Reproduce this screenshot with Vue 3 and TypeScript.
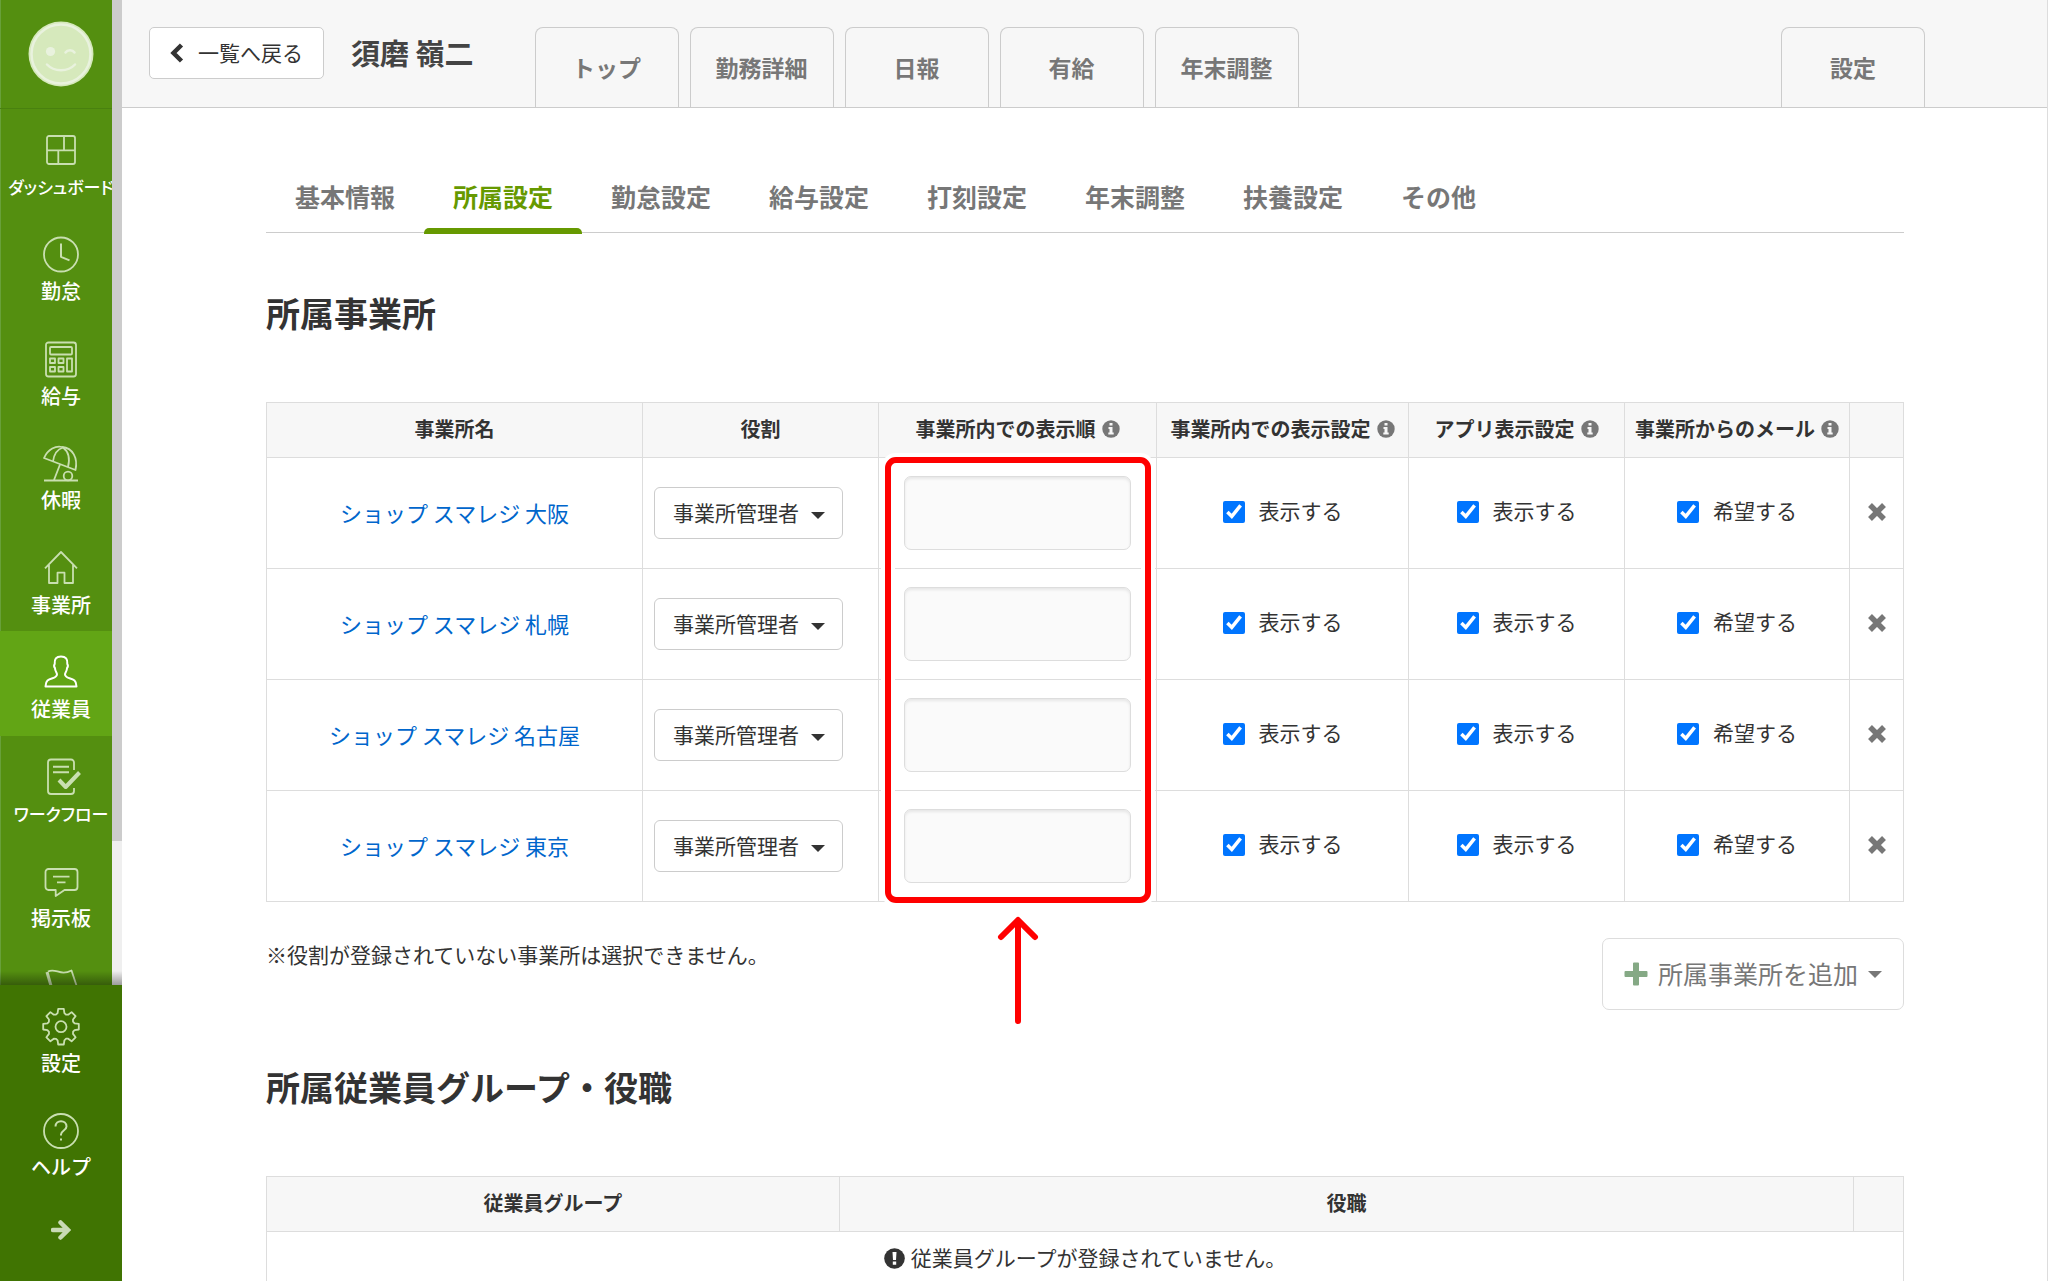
<script setup lang="ts">
import { ref } from 'vue'

interface Stroke {
  d: string
  width?: number
}

interface NavItem {
  label?: string
  strokes: Stroke[]
  active?: boolean
  tight?: boolean
}

interface Office {
  name: string
  role: string
  order: string
  visible: boolean
  appVisible: boolean
  mail: boolean
}

// Circle as a path, so that every sidebar icon is a plain list of strokes
const circle = (cx: number, cy: number, r: number): string =>
  `M${cx - r} ${cy}a${r} ${r} 0 1 0 ${2 * r} 0a${r} ${r} 0 1 0 ${-2 * r} 0z`

// Eight-toothed gear outline
const gear = (cx: number, cy: number): string => {
  const points: string[] = []
  const steps: [number, number][] = [
    [-14, 14],
    [-9, 18],
    [9, 18],
    [14, 14],
    [22, 13],
  ]
  for (let tooth = 0; tooth < 8; tooth++) {
    for (const [offset, radius] of steps) {
      const angle = ((tooth * 45 + offset) * Math.PI) / 180
      const x = cx + radius * Math.sin(angle)
      const y = cy - radius * Math.cos(angle)
      points.push(`${x.toFixed(1)} ${y.toFixed(1)}`)
    }
  }
  return `M${points.join('L')}Z`
}

const navItems: NavItem[] = [
  {
    label: 'ダッシュボード',
    tight: true,
    strokes: [
      { d: 'M8 6h24a2 2 0 0 1 2 2v24a2 2 0 0 1-2 2H8a2 2 0 0 1-2-2V8a2 2 0 0 1 2-2zM6 20.3h28M23 6v14.3M17.3 20.3V34' },
    ],
  },
  { label: '勤怠', strokes: [{ d: circle(20, 20.5, 17) }, { d: 'M20 9.5v13.3l8.5 3.5', width: 2 }] },
  {
    label: '給与',
    strokes: [
      { d: 'M7.5 3.5h25a2.5 2.5 0 0 1 2.5 2.5v29a2.5 2.5 0 0 1-2.5 2.5h-25a2.5 2.5 0 0 1-2.5-2.5v-29a2.5 2.5 0 0 1 2.5-2.5z' },
      { d: 'M10 8h20a1 1 0 0 1 1 1v5.5a1 1 0 0 1-1 1H10a1 1 0 0 1-1-1V9a1 1 0 0 1 1-1z' },
      { d: 'M9 19.5h5v4.5H9zM17.5 19.5h5v4.5h-5zM9 28h5v4.5H9zM17.5 28h5v4.5h-5zM26 19.5h5v13h-5z' },
    ],
  },
  {
    label: '休暇',
    strokes: [
      { d: 'M3 15C7 6 15 2.5 21 4C32 5 37 15 34.5 27Z' },
      { d: 'M12 18.5C13 11 17 6 22 4.5C28 9 29 16 27 24' },
      { d: 'M19 21.5L13 37M3 37.5h34' },
      { d: circle(27, 33, 4.3) },
    ],
  },
  { label: '事業所', strokes: [{ d: 'M4 20.3L20 4l16 16.3M8 17v18h8.500V24.700h7V35H32V17' }] },
  {
    label: '従業員',
    active: true,
    strokes: [
      {
        d: 'M4.5 34.5h31c0-6-3-7-7-8.3c-3-1-4.5-1.7-4.5-4c0-1.5 2-3 2-6c1.5-2 .8-3.500 .3-4.200c.5-5-1.500-7.500-6.300-7.500s-6.800 2.500-6.300 7.500c-.5.7-1.200 2.200.3 4.200c0 3 2 4.500 2 6c0 2.300-1.500 3-4.500 4c-4 1.300-7 2.300-7 8.300z',
        width: 2,
      },
    ],
  },
  {
    label: 'ワークフロー',
    tight: true,
    strokes: [
      { d: 'M33 13V5.500a3 3 0 0 0-3-3H10a3 3 0 0 0-3 3V34a3 3 0 0 0 3 3h20a3 3 0 0 0 3-3V31' },
      { d: 'M12 9.700h16M12 15.300h16', width: 2 },
      { d: 'M18 23l6.700 7L38.500 15.500', width: 4 },
    ],
  },
  {
    label: '掲示板',
    strokes: [
      { d: 'M7.500 8h26a3 3 0 0 1 3 3v15a3 3 0 0 1-3 3H23.500l-8.800 6V29H7.500a3 3 0 0 1-3-3V11a3 3 0 0 1 3-3zM12 15.700h16.500M16 21.300h8.500' },
    ],
  },
  {
    strokes: [{ d: 'M6 6l9 31', width: 3 }, { d: 'M7 5.500c8-4 12 5 23.500-1L37 24c-10 5-14-4-24 0' }],
  },
]

const footerItems: NavItem[] = [
  { label: '設定', strokes: [{ d: gear(20, 20.7) }, { d: circle(20, 20.7, 5.5) }] },
  {
    label: 'ヘルプ',
    strokes: [
      { d: circle(20, 21, 17) },
      { d: 'M14.500 16.500c0-7 11-7 11 0c0 4-5.500 4-5.500 8v1M20 28.500v2', width: 2 },
    ],
  },
]

const pageTabs: string[] = ['トップ', '勤務詳細', '日報', '有給', '年末調整']
const sections: string[] = ['基本情報', '所属設定', '勤怠設定', '給与設定', '打刻設定', '年末調整', '扶養設定', 'その他']
const currentSection = ref('所属設定')

const roles: string[] = ['事業所管理者']
const offices = ref<Office[]>(
  ['大阪', '札幌', '名古屋', '東京'].map((place) => ({
    name: `ショップ スマレジ ${place}`,
    role: '事業所管理者',
    order: '',
    visible: true,
    appVisible: true,
    mail: true,
  })),
)

const removeOffice = (index: number): void => {
  offices.value.splice(index, 1)
}
</script>

<template>
  <div class="app">
    <aside class="sidebar">
      <div class="menu">
        <div class="avatar">
          <svg width="66" height="66" viewBox="0 0 66 66" aria-hidden="true">
            <circle cx="33" cy="33" r="32.5" fill="#d6e9bc" />
            <circle cx="33" cy="33" r="29.5" fill="none" stroke="#e9f2de" stroke-width="2.5" />
            <circle cx="22.5" cy="30.5" r="4.6" fill="#e9f2de" />
            <g fill="none" stroke="#e9f2de" stroke-width="2.5" stroke-linecap="round">
              <path d="M37.5 31.5c2-3 7-3 9 0" />
              <path d="M19 43.5c7 7.5 21 7.5 28 0" />
            </g>
          </svg>
        </div>
        <nav class="menu-list" aria-label="メインメニュー">
          <a v-for="(item, n) in navItems" :key="n" href="#" class="menu-item" :class="{ active: item.active }">
            <svg width="40" height="40" viewBox="0 0 40 40" aria-hidden="true">
              <path v-for="(s, i) in item.strokes" :key="i" :d="s.d" :stroke-width="s.width ?? 1.8" />
            </svg>
            <span v-if="item.label" class="menu-label" :class="{ tight: item.tight }">{{ item.label }}</span>
          </a>
        </nav>
        <div class="scroll-track"><div class="scroll-thumb"></div></div>
      </div>
      <div class="sidebar-footer">
        <a v-for="item in footerItems" :key="item.label" href="#" class="menu-item">
          <svg width="40" height="40" viewBox="0 0 40 40" aria-hidden="true">
            <path v-for="(s, i) in item.strokes" :key="i" :d="s.d" :stroke-width="s.width ?? 1.8" />
          </svg>
          <span class="menu-label">{{ item.label }}</span>
        </a>
        <button type="button" class="expand" aria-label="メニューを開く">
          <svg width="20" height="20" viewBox="0 0 20 20" aria-hidden="true">
            <path d="M2 10h14M9.5 2.5L17 10l-7.500 7.500" fill="none" stroke="#c9dab6" stroke-width="4.5" stroke-linecap="round" />
          </svg>
        </button>
      </div>
    </aside>

    <div class="page">
      <header class="topbar">
        <button type="button" class="back">
          <svg width="14" height="20" viewBox="0 0 14 20" aria-hidden="true">
            <path d="M11.5 2L3.500 10l8 8" fill="none" stroke="#333" stroke-width="4.5" />
          </svg>
          <span>一覧へ戻る</span>
        </button>
        <h1>須磨 嶺二</h1>
        <nav class="page-tabs" aria-label="従業員メニュー">
          <a v-for="tab in pageTabs" :key="tab" href="#" class="page-tab">{{ tab }}</a>
        </nav>
        <a href="#" class="page-tab settings-tab">設定</a>
      </header>

      <main>
        <nav class="sections" aria-label="設定区分">
          <a
            v-for="name in sections"
            :key="name"
            href="#"
            class="section"
            :class="{ current: name === currentSection }"
            @click.prevent="currentSection = name"
            >{{ name }}</a
          >
        </nav>

        <h2>所属事業所</h2>

        <div class="office-wrap">
          <table class="offices">
            <colgroup>
              <col />
              <col class="c-role" />
              <col class="c-order" />
              <col class="c-visible" />
              <col class="c-app" />
              <col class="c-mail" />
              <col class="c-remove" />
            </colgroup>
            <thead>
              <tr>
                <th scope="col">事業所名</th>
                <th scope="col">役割</th>
                <th v-for="title in ['事業所内での表示順', '事業所内での表示設定', 'アプリ表示設定', '事業所からのメール']" :key="title" scope="col">
                  <span class="with-info">
                    {{ title }}
                    <svg width="18" height="18" viewBox="0 0 18 18" aria-hidden="true">
                      <circle cx="9" cy="9" r="8.7" fill="#777" />
                      <path d="M7.5 3h3v2.500h-3zM6.500 7h4v5.500h1.200v2H6.300v-2h1.200V9h-1z" fill="#f7f7f7" />
                    </svg>
                  </span>
                </th>
                <th scope="col"></th>
              </tr>
            </thead>
            <tbody>
              <tr v-for="(office, index) in offices" :key="office.name">
                <td><a href="#" class="office-link">{{ office.name }}</a></td>
                <td>
                  <div class="role">
                    <select v-model="office.role" :aria-label="`${office.name}の役割`">
                      <option v-for="role in roles" :key="role">{{ role }}</option>
                    </select>
                    <span class="caret"></span>
                  </div>
                </td>
                <td>
                  <input v-model="office.order" type="text" class="order" :aria-label="`${office.name}の表示順`" />
                </td>
                <td>
                  <label class="check"><input v-model="office.visible" type="checkbox" /><span>表示する</span></label>
                </td>
                <td>
                  <label class="check"><input v-model="office.appVisible" type="checkbox" /><span>表示する</span></label>
                </td>
                <td>
                  <label class="check"><input v-model="office.mail" type="checkbox" /><span>希望する</span></label>
                </td>
                <td>
                  <button type="button" class="remove" :aria-label="`${office.name}を削除`" @click="removeOffice(index)">
                    <svg width="20" height="20" viewBox="0 0 20 20" aria-hidden="true">
                      <path d="M3 3l14 14M17 3L3 17" stroke="#777" stroke-width="5.5" />
                    </svg>
                  </button>
                </td>
              </tr>
            </tbody>
          </table>
          <div class="highlight">
            <svg class="pointer" width="42" height="112" viewBox="0 0 42 112" aria-hidden="true">
              <path d="M21 106V6M4 22L21 5l17 17" fill="none" stroke="#f00" stroke-width="6" stroke-linecap="round" stroke-linejoin="round" />
            </svg>
          </div>
        </div>

        <div class="below-table">
          <p>※役割が登録されていない事業所は選択できません。</p>
          <button type="button" class="add">
            <svg width="24" height="24" viewBox="0 0 24 24" aria-hidden="true">
              <path d="M10 .5h4a1 1 0 0 1 1 1V9h7.500a1 1 0 0 1 1 1v4a1 1 0 0 1-1 1H15v7.500a1 1 0 0 1-1 1h-4a1 1 0 0 1-1-1V15H1.500a1 1 0 0 1-1-1v-4a1 1 0 0 1 1-1H9V1.500a1 1 0 0 1 1-1z" fill="#85a985" />
            </svg>
            <span>所属事業所を追加</span>
            <i class="caret"></i>
          </button>
        </div>

        <h2>所属従業員グループ・役職</h2>

        <table class="groups">
          <colgroup>
            <col class="c-group" />
            <col />
            <col class="c-action" />
          </colgroup>
          <thead>
            <tr>
              <th scope="col">従業員グループ</th>
              <th scope="col">役職</th>
              <th scope="col"></th>
            </tr>
          </thead>
          <tbody>
            <tr>
              <td colspan="3">
                <div class="empty">
                  <svg width="21" height="21" viewBox="0 0 21 21" aria-hidden="true">
                    <circle cx="10.5" cy="10.5" r="10.3" fill="#333" />
                    <path d="M8.5 4h4l-.5 8H9zM8.800 13.500h3.400v3.200H8.800z" fill="#fff" />
                  </svg>
                  <span>従業員グループが登録されていません。</span>
                </div>
              </td>
            </tr>
          </tbody>
        </table>
      </main>
    </div>
  </div>
</template>

<style>
body {
  margin: 0;
}
</style>

<style scoped>
.app {
  display: flex;
  height: 100vh;
  overflow: hidden;
  background: #fff;
  color: #333;
  font-family: 'Noto Sans CJK JP', sans-serif;
  font-size: 21px;
  line-height: 28px;
}

.app *,
.app *::before,
.app *::after {
  box-sizing: border-box;
}

a {
  text-decoration: none;
}

button,
input,
select {
  margin: 0;
  color: inherit;
  font: inherit;
}

/* Sidebar */
.sidebar {
  position: relative;
  display: flex;
  flex: none;
  flex-direction: column;
  width: 122px;
  background: #548f10;
}

.menu {
  position: relative;
  flex: 1;
  min-height: 0;
  overflow: hidden;
  box-shadow: inset 1px 0 #68a03a;
}

.menu::after {
  position: absolute;
  right: 0;
  bottom: 0;
  left: 0;
  height: 14px;
  background: linear-gradient(rgba(0, 0, 0, 0), rgba(0, 0, 0, 0.35));
  content: '';
}

.avatar {
  display: flex;
  align-items: center;
  justify-content: center;
  height: 109px;
  border-bottom: 1px solid #49810f;
}

.menu-list {
  display: grid;
  grid-template-columns: minmax(0, 1fr);
  grid-auto-rows: 1fr;
  height: 940px;
}

.menu-item {
  display: flex;
  flex-direction: column;
  align-items: center;
  gap: 3px;
  padding-top: 21px;
  color: #fff;
}

.menu-item svg {
  flex: none;
  fill: none;
  stroke: #c9dfb0;
  stroke-linejoin: round;
}

.menu-item.active {
  background: #62a515;
}

.menu-item.active svg {
  stroke: #fff;
}

.menu-label {
  font-size: 20px;
  font-weight: 500;
  white-space: nowrap;
}

.menu-label.tight {
  font-size: 17px;
  font-feature-settings: 'palt';
}

.scroll-track {
  position: absolute;
  top: 0;
  right: 0;
  bottom: 0;
  width: 10px;
  background: #efefef;
}

.scroll-thumb {
  height: 841px;
  background: #ccc;
}

.sidebar-footer {
  flex: none;
  padding-bottom: 15px;
  background: #407402;
}

.sidebar-footer .menu-item {
  height: 104px;
}

.expand {
  display: flex;
  align-items: center;
  justify-content: center;
  width: 100%;
  height: 73px;
  border: 0;
  background: none;
}

/* Top bar */
.page {
  flex: 1;
  min-width: 0;
  overflow-y: auto;
  border-right: 1px solid #ddd;
  scrollbar-width: none;
}

.topbar {
  display: flex;
  align-items: flex-start;
  height: 108px;
  padding: 27px 122px 0 27px;
  border-bottom: 1px solid #ccc;
  background: #f7f7f7;
}

.back {
  display: flex;
  gap: 14px;
  align-items: center;
  height: 52px;
  padding: 0 20px;
  border: 1px solid #ccc;
  border-radius: 5px;
  background: #fff;
}

h1 {
  margin: 5px 61px 0 27px;
  color: #444;
  font-size: 29px;
  font-weight: 700;
  line-height: 40px;
  white-space: nowrap;
}

.page-tabs {
  display: flex;
  gap: 11px;
}

.page-tab {
  width: 144px;
  height: 80px;
  border: 1px solid #ccc;
  border-bottom: 0;
  border-radius: 8px 8px 0 0;
  color: #777;
  font-size: 23px;
  font-weight: 700;
  line-height: 78px;
  text-align: center;
}

.settings-tab {
  margin-left: auto;
}

/* Content */
main {
  padding: 58px 143px 40px 144px;
}

.sections {
  display: flex;
  height: 67px;
  margin-bottom: 56px;
  border-bottom: 1px solid #ccc;
}

.section {
  position: relative;
  padding: 0 29px;
  color: #777;
  font-size: 25px;
  font-weight: 700;
  line-height: 60px;
}

.section.current {
  color: #690;
}

.section.current::after {
  position: absolute;
  right: 0;
  bottom: -2px;
  left: 0;
  height: 6px;
  border-radius: 5px 5px 0 0;
  background: #690;
  content: '';
}

h2 {
  margin: 53px 0 65px;
  font-size: 34px;
  font-weight: 700;
  line-height: 48px;
}

table {
  width: 100%;
  border-collapse: collapse;
  table-layout: fixed;
}

th,
td {
  padding: 0;
  border: 1px solid #ddd;
  text-align: center;
  white-space: nowrap;
}

th {
  height: 55px;
  padding-bottom: 3px;
  background: #f7f7f7;
  font-size: 20px;
  font-weight: 700;
}

.offices td {
  height: 111px;
}

.c-role {
  width: 236px;
}

.c-order {
  width: 278px;
}

.c-visible {
  width: 252px;
}

.c-app {
  width: 216px;
}

.c-mail {
  width: 225px;
}

.c-remove {
  width: 54px;
}

.with-info,
.empty,
.check {
  display: flex;
  align-items: center;
  justify-content: center;
}

.with-info,
.empty {
  gap: 6px;
}

/* Optical centring of text lines in their cells */
.office-link,
.check,
.empty,
.empty span,
.check span,
.back span,
.add span {
  padding-bottom: 3px;
}

.office-link {
  display: block;
  color: #06c;
  font-size: 22px;
}

.role {
  position: relative;
  width: 189px;
  margin: 0 11px;
}

.role select {
  display: block;
  width: 100%;
  height: 52px;
  padding: 0 18px 3px;
  border: 1px solid #ccc;
  border-radius: 6px;
  appearance: none;
  background: #fff;
}

.caret {
  border: 7px solid transparent;
  border-top-color: currentColor;
  border-bottom: 0;
}

.role .caret {
  position: absolute;
  top: 25px;
  right: 18px;
  pointer-events: none;
}

.order {
  display: block;
  width: 227px;
  height: 74px;
  margin: 0 auto;
  padding: 0 14px;
  border: 1px solid #ddd;
  border-radius: 7px;
  background: #fafafa;
  box-shadow: inset 0 2px 3px rgba(0, 0, 0, 0.08);
}

.check {
  gap: 14px;
}

.check input {
  width: 22px;
  height: 22px;
  accent-color: #0075ff;
}

.remove {
  display: block;
  margin: 0 auto;
  padding: 0 0 3px;
  border: 0;
  background: none;
}

.remove svg {
  display: block;
}

.office-wrap {
  position: relative;
}

/* The columns right of the marked one have fixed widths, so it is placed from the right */
.highlight {
  position: absolute;
  top: 55px;
  right: 753px;
  bottom: -1px;
  width: 266px;
  border: 6px solid #f00;
  border-radius: 11px;
  box-shadow:
    0 0 0 4px #fff,
    inset 0 0 0 4px #fff;
  pointer-events: none;
}

.pointer {
  position: absolute;
  top: calc(100% + 18px);
  left: calc(50% - 21px);
}

.below-table {
  display: flex;
  align-items: flex-start;
  justify-content: space-between;
  margin-top: 36px;
}

.below-table p {
  margin: 0;
  line-height: 32px;
}

.add {
  display: flex;
  gap: 10px;
  align-items: center;
  height: 72px;
  padding: 0 21px;
  border: 1px solid #ddd;
  border-radius: 7px;
  background: #fff;
  color: #777;
  font-size: 25px;
}

.c-group {
  width: 35%;
}

.c-action {
  width: 50px;
}

.groups td {
  height: 56px;
}
</style>
